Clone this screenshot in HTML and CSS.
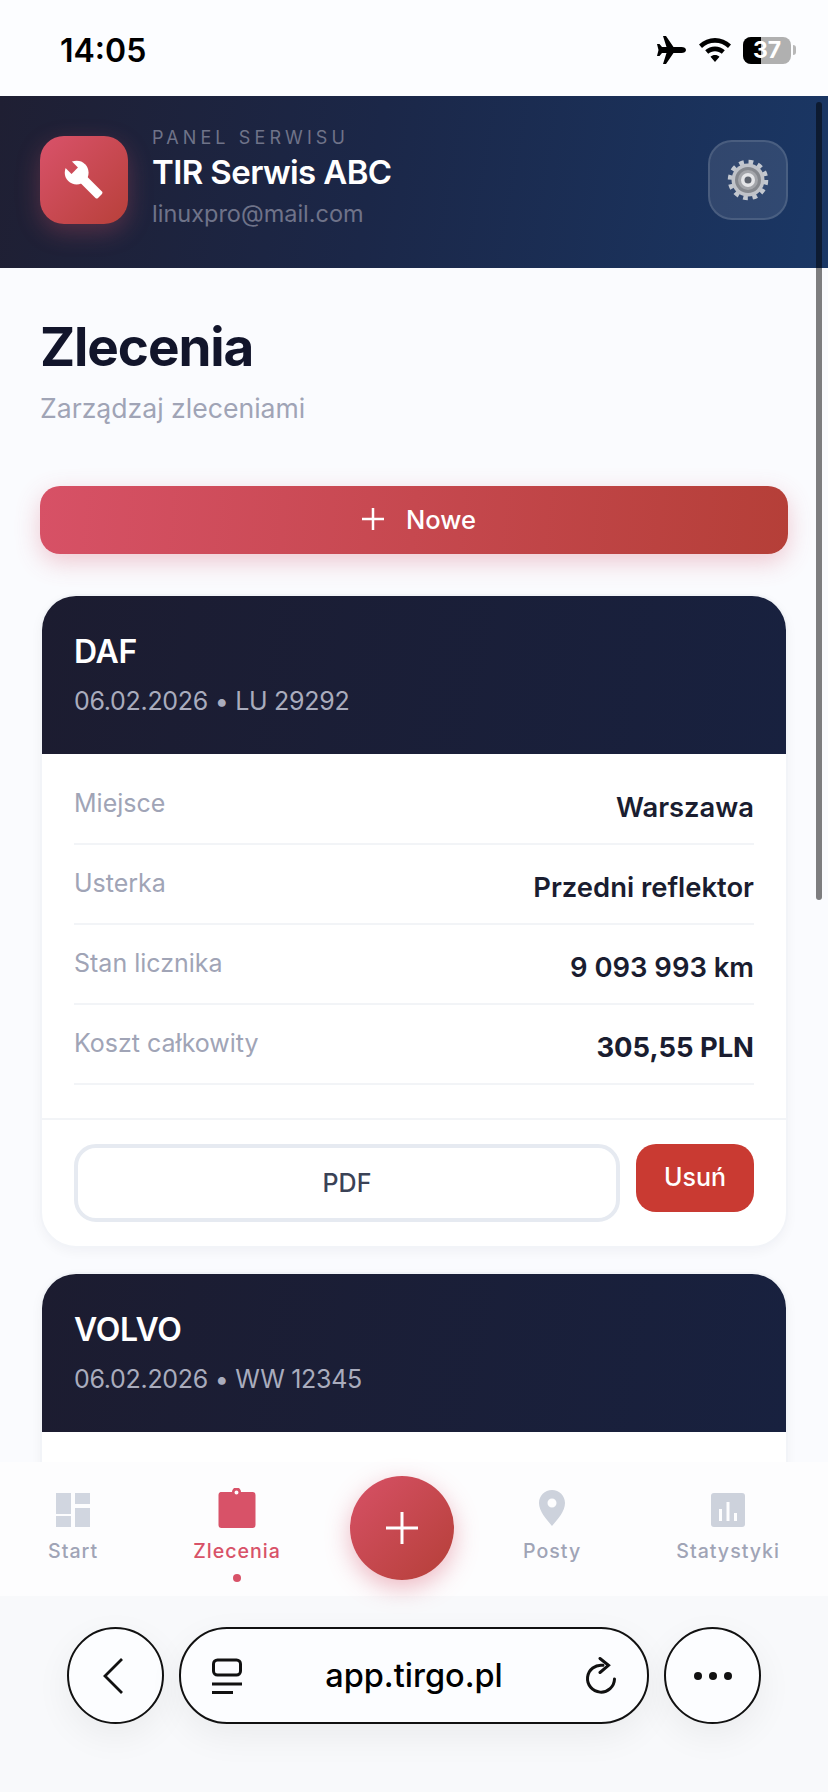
FILE: index.html
```html
<!DOCTYPE html>
<html lang="pl">
  <head>
    <meta charset="UTF-8" />
    <meta name="viewport" content="width=device-width, initial-scale=1.0" />
    <title>Zlecenia</title>
    <link rel="stylesheet" href="styles.css">
  </head>
  <body>
    <div class="phone">
      <div class="status">
        <div class="time">14:05</div>
        <div class="status-icons">
          <svg class="ic-plane" width="30" height="28" viewBox="0 0 30 28"><path d="M6 0 h3 l7.500 11 h8 c2.500 0 4.500 1.200 4.500 3 s-2 3-4.500 3 h-8 L9 28 H6 l3.500-11 H5 l-2.500 3 H0 l1.500-6 L0 8 h2.500 L5 11 h4.500 Z"/></svg>
          <svg class="ic-wifi" width="32" height="24" viewBox="0 0 32 24"><path d="M16 0 C22 0 27.500 2.400 32 6.500 L29 10 C25.500 6.700 21 4.800 16 4.800 S6.500 6.700 3 10 L0 6.500 C4.500 2.400 10 0 16 0 Z M16 8.500 C19.800 8.500 23.200 10 25.800 12.300 L22.800 15.700 C21 14.100 18.600 13.200 16 13.200 S11 14.100 9.200 15.700 L6.200 12.300 C8.800 10 12.200 8.500 16 8.500 Z M16 17 C17.800 17 19.300 17.600 20.500 18.700 L16 24 11.500 18.700 C12.700 17.600 14.200 17 16 17 Z"/></svg>
          <div class="battery">
            <div class="battery-body"><span class="battery-fill"></span><span class="battery-num">37</span></div>
            <span class="battery-nub"></span>
          </div>
        </div>
      </div>

      <div class="main">
        <div class="scrollbar"></div>
        <div class="top">
          <div class="top-left">
            <div class="logo">
              <svg width="44" height="44" viewBox="0 0 24 24">
                <mask id="wr"><rect width="24" height="24" fill="#000"/><circle cx="8" cy="8" r="6.500" fill="#fff"/><rect x="8" y="5.500" width="18" height="5" rx="1" transform="rotate(45 8 8)" fill="#fff"/><rect x="5.500" y="-2" width="5" height="8.500" transform="rotate(-45 8 8)" fill="#000"/></mask>
                <rect width="24" height="24" fill="#fff" mask="url(#wr)"/>
              </svg>
            </div>
            <div class="top-text">
              <div class="top-label">PANEL SERWISU</div>
              <div class="top-name">TIR Serwis ABC</div>
              <div class="top-mail">linuxpro@mail.com</div>
            </div>
          </div>
          <div class="gear-btn">
            <svg width="44" height="44" viewBox="0 0 44 44">
              <circle cx="22" cy="22" r="18" fill="none" stroke="#c3c8d0" stroke-width="4.500" stroke-dasharray="4.700 4.725"/>
              <circle cx="22" cy="22" r="16.500" fill="#c0c3c9"/>
              <circle cx="22" cy="22" r="13" fill="#85888e"/>
              <circle cx="22" cy="22" r="10" fill="#a3a5aa"/>
              <circle cx="22" cy="22" r="7" fill="#e4e5e8"/>
              <circle cx="22" cy="22" r="3.500" fill="#5d636e"/>
            </svg>
          </div>
        </div>

        <div class="content">
          <h1>Zlecenia</h1>
          <p class="sub">Zarządzaj zleceniami</p>
          <div class="new-btn">
            <svg width="22" height="22" viewBox="0 0 22 22"><path d="M11 0 V22 M0 11 H22" stroke="#fff" stroke-width="2.500"/></svg>
            <span>Nowe</span>
          </div>

          <div class="card">
            <div class="card-head">
              <div class="card-title">DAF</div>
              <div class="card-sub">06.02.2026 • LU 29292</div>
            </div>
            <div class="card-body">
              <div class="row"><span class="row-label">Miejsce</span><span class="row-value">Warszawa</span></div>
              <div class="row"><span class="row-label">Usterka</span><span class="row-value">Przedni reflektor</span></div>
              <div class="row"><span class="row-label">Stan licznika</span><span class="row-value">9 093 993 km</span></div>
              <div class="row"><span class="row-label">Koszt całkowity</span><span class="row-value strong">305,55 PLN</span></div>
            </div>
            <div class="card-foot">
              <div class="pdf-btn">PDF</div>
              <div class="del-btn">Usuń</div>
            </div>
          </div>

          <div class="card">
            <div class="card-head">
              <div class="card-title">VOLVO</div>
              <div class="card-sub">06.02.2026 • WW 12345</div>
            </div>
            <div class="card-body card-rest"></div>
          </div>
        </div>
      </div>

      <div class="nav">
        <div class="nav-item">
          <svg width="40" height="40" viewBox="0 0 40 40" fill="#d1d6e0"><rect x="3" y="5" width="15" height="21"/><rect x="22" y="5" width="15" height="11"/><rect x="3" y="28" width="15" height="11"/><rect x="22" y="20" width="15" height="19"/></svg>
          <span>Start</span>
        </div>
        <div class="nav-item active">
          <svg width="40" height="40" viewBox="0 0 40 40" fill="#d85268" fill-rule="evenodd"><path d="M4 4 H15.500 A4.500 4.500 0 0 1 24.500 4 H36 A3 3 0 0 1 39 7 V37 A3 3 0 0 1 36 40 H5 A3 3 0 0 1 2 37 V7 A3 3 0 0 1 4 4 Z M20 2.500 A2 2 0 1 0 20 6.500 A2 2 0 1 0 20 2.500 Z" transform="translate(-0.500 0)"/></svg>
          <span>Zlecenia</span>
          <i class="nav-dot"></i>
        </div>
        <div class="fab">
          <svg width="32" height="32" viewBox="0 0 32 32"><path d="M16 0 V32 M0 16 H32" stroke="#fff" stroke-width="3"/></svg>
        </div>
        <div class="nav-item">
          <svg width="40" height="40" viewBox="0 0 40 40" fill="#cdd2dc" fill-rule="evenodd"><path d="M20 2 C27.300 2 33 7.700 33 15 C33 23 26 31 20 38 C14 31 7 23 7 15 C7 7.700 12.700 2 20 2 Z M20 10.500 A4.500 4.500 0 1 0 20 19.500 A4.500 4.500 0 1 0 20 10.500 Z"/></svg>
          <span>Posty</span>
        </div>
        <div class="nav-item">
          <svg width="40" height="40" viewBox="0 0 40 40" fill-rule="evenodd"><path fill="#cdd2dc" d="M6 5 H34 A3 3 0 0 1 37 8 V36 A3 3 0 0 1 34 39 H6 A3 3 0 0 1 3 36 V8 A3 3 0 0 1 6 5 Z M11 21 V33 H14 V21 Z M18.500 14 V33 H21.500 V14 Z M26 25 V33 H29 V25 Z"/></svg>
          <span>Statystyki</span>
        </div>
      </div>

      <div class="browser">
        <div class="round-btn back-btn">
          <svg width="24" height="38" viewBox="0 0 24 38"><path d="M21 2 L4 19 L21 36" fill="none" stroke="#111" stroke-width="2.800"/></svg>
        </div>
        <div class="url">
          <svg width="32" height="38" viewBox="0 0 32 38"><rect x="2.500" y="3" width="27" height="15" rx="4" fill="none" stroke="#111" stroke-width="3"/><path d="M1 27 H31 M1 35.500 H22" stroke="#111" stroke-width="3"/></svg>
          <span>app.tirgo.pl</span>
          <svg width="32" height="38" viewBox="0 0 32 38"><path d="M18 8.300 A13.500 13.500 0 1 0 29.500 22" fill="none" stroke="#111" stroke-width="3" stroke-linecap="round"/><path d="M15 1.500 L23.500 8.300 L15 15.500" fill="none" stroke="#111" stroke-width="3" stroke-linecap="round"/></svg>
        </div>
        <div class="round-btn">
          <svg width="40" height="10" viewBox="0 0 40 10" fill="#111"><circle cx="5" cy="5" r="4"/><circle cx="20" cy="5" r="4"/><circle cx="35" cy="5" r="4"/></svg>
        </div>
      </div>
    </div>
  </body>
</html>
```

FILE: styles.css
```css
* {
  box-sizing: border-box;
}
body {
  margin: 0;
  background: #f9fafc;
  font-family: "Inter", "Liberation Sans", sans-serif;
}
.phone {
  width: 828px;
  height: 1792px;
  display: flex;
  flex-direction: column;
  overflow: hidden;
}

/* status bar */
.status {
  height: 96px;
  flex: none;
  background: #fcfdff;
  display: flex;
  justify-content: space-between;
  align-items: center;
  padding: 4px 32px 0 60px;
}
.time {
  font-size: 32px;
  font-weight: 600;
  color: #000;
}
.status-icons {
  display: flex;
  align-items: center;
  gap: 12px;
}
.battery {
  display: flex;
  align-items: center;
  gap: 2px;
}
.battery-body {
  width: 48px;
  height: 27px;
  border-radius: 8px;
  background: #b0b0b0;
  position: relative;
  overflow: hidden;
  text-align: center;
}
.battery-fill {
  position: absolute;
  left: 0;
  top: 0;
  bottom: 0;
  width: 18px;
  background: #000;
}
.battery-num {
  position: relative;
  color: #fff;
  font-size: 23px;
  font-weight: 700;
  line-height: 27px;
}
.battery-nub {
  width: 3px;
  height: 10px;
  border-radius: 0 3px 3px 0;
  background: #b8b8b8;
}

/* scrolling part */
.main {
  flex: 1;
  min-height: 0;
  overflow: hidden;
  position: relative;
  background: #fafbfe;
}
.scrollbar {
  position: absolute;
  right: 6px;
  top: 6px;
  width: 6px;
  height: 798px;
  border-radius: 3px;
  background: rgba(0, 0, 0, 0.5);
}
.top {
  height: 172px;
  background: linear-gradient(100deg, #1f1f33 0%, #1b2748 45%, #1a3765 100%);
  display: flex;
  justify-content: space-between;
  align-items: center;
  padding: 0 40px 4px;
}
.top-left {
  display: flex;
  align-items: center;
  gap: 24px;
}
.top-text {
  padding-bottom: 4px;
}
.logo {
  width: 88px;
  height: 88px;
  border-radius: 24px;
  background: linear-gradient(135deg, #d9526a, #b8403a);
  box-shadow: 0 8px 24px rgba(216, 82, 104, 0.3);
  display: flex;
  align-items: center;
  justify-content: center;
}
.top-label {
  font-size: 18px;
  line-height: 24px;
  letter-spacing: 4.1px;
  color: #6f7389;
}
.top-name {
  font-size: 33px;
  line-height: 44px;
  font-weight: 600;
  color: #fff;
  letter-spacing: -0.6px;
}
.top-mail {
  font-size: 23.5px;
  line-height: 34px;
  margin-top: 3px;
  color: #6f7389;
}
.gear-btn {
  width: 80px;
  height: 80px;
  border-radius: 24px;
  background: rgba(255, 255, 255, 0.1);
  border: 2px solid rgba(255, 255, 255, 0.12);
  display: flex;
  align-items: center;
  justify-content: center;
}

.content {
  padding: 49px 40px 0;
}
h1 {
  margin: 0;
  font-size: 53px;
  line-height: 60px;
  font-weight: 700;
  color: #12152b;
  letter-spacing: -1.1px;
}
.sub {
  margin: 13px 0 60px;
  font-size: 26.6px;
  line-height: 36px;
  color: #a0a4b6;
}
.new-btn {
  height: 68px;
  border-radius: 20px;
  background: linear-gradient(95deg, #d75166, #b53f38);
  box-shadow: 0 8px 24px rgba(216, 82, 104, 0.3);
  display: flex;
  align-items: center;
  justify-content: center;
  gap: 22px;
  padding: 0 0 2px 10px;
  color: #fff;
  font-size: 25.5px;
  font-weight: 500;
  margin-bottom: 40px;
}

/* order cards */
.card {
  background: #fff;
  border: 2px solid #f2f4f8;
  border-radius: 36px;
  overflow: hidden;
  box-shadow: 0 4px 12px rgba(20, 25, 50, 0.04);
  margin-bottom: 24px;
}
.card-head {
  height: 158px;
  padding: 34px 32px 0;
  background: linear-gradient(100deg, #1c1c30, #18213f);
}
.card-title {
  font-size: 32px;
  line-height: 44px;
  font-weight: 600;
  color: #fff;
  letter-spacing: -0.3px;
}
.card-sub {
  margin-top: 10px;
  font-size: 25px;
  line-height: 34px;
  color: #a9acbd;
  letter-spacing: -0.3px;
}
.card-body {
  padding: 11px 32px 0;
}
.card-rest {
  height: 80px;
}
.row {
  height: 80px;
  padding-top: 23px;
  display: flex;
  justify-content: space-between;
  border-bottom: 2px solid #f2f4f7;
}
.row-label {
  font-size: 25px;
  line-height: 30px;
  color: #a0a4b6;
}
.row-value {
  font-size: 27.4px;
  line-height: 38px;
  font-weight: 600;
  color: #1a1d30;
}
.row-value.strong {
  font-weight: 700;
}
.card-foot {
  margin-top: 33px;
  border-top: 2px solid #f2f4f7;
  padding: 24px 32px;
  display: flex;
  align-items: flex-start;
  gap: 16px;
}
.pdf-btn {
  flex: 1;
  height: 78px;
  border: 4px solid #e6eaf1;
  border-radius: 22px;
  display: flex;
  align-items: center;
  justify-content: center;
  color: #3a4256;
  font-size: 25px;
  font-weight: 500;
}
.del-btn {
  width: 118px;
  height: 68px;
  border-radius: 20px;
  background: #c93a32;
  color: #fff;
  font-size: 25px;
  font-weight: 500;
  padding-bottom: 2px;
  display: flex;
  align-items: center;
  justify-content: center;
}

/* bottom nav */
.nav {
  height: 134px;
  flex: none;
  position: relative;
  background: #fdfdfe;
  display: flex;
  justify-content: space-between;
  padding: 14px 22px 0;
}
.nav-item {
  padding: 12px 26px 0;
  display: flex;
  flex-direction: column;
  align-items: center;
  color: #a0a4b6;
  font-size: 19.6px;
  font-weight: 500;
  letter-spacing: 1px;
  line-height: 28px;
}
.nav-item span {
  margin-top: 9px;
}
.nav-item.active {
  color: #d85268;
}
.nav-dot {
  width: 8px;
  height: 8px;
  margin-top: 9px;
  border-radius: 50%;
  background: #d85268;
}
.fab {
  width: 104px;
  height: 104px;
  flex: none;
  border-radius: 50%;
  background: linear-gradient(135deg, #d75166, #b53f38);
  box-shadow: 0 8px 24px rgba(216, 82, 104, 0.4);
  display: flex;
  align-items: center;
  justify-content: center;
}

/* browser bar */
.browser {
  height: 196px;
  flex: none;
  display: flex;
  gap: 15px;
  padding: 31px 67px 0;
  background: #f8f9fb;
}
.round-btn {
  width: 97px;
  height: 97px;
  flex: none;
  border: 2px solid #111;
  border-radius: 50%;
  background: #fcfdff;
  box-shadow: 0 12px 36px rgba(0, 0, 0, 0.06);
  display: flex;
  align-items: center;
  justify-content: center;
}
.back-btn {
  padding-right: 6px;
}
.url {
  flex: 1;
  height: 97px;
  border: 2px solid #111;
  border-radius: 48px;
  background: #fcfdff;
  box-shadow: 0 12px 36px rgba(0, 0, 0, 0.06);
  display: flex;
  align-items: center;
  justify-content: space-between;
  padding: 0 30px;
  font-size: 32.5px;
  font-weight: 500;
  color: #000;
}
```
